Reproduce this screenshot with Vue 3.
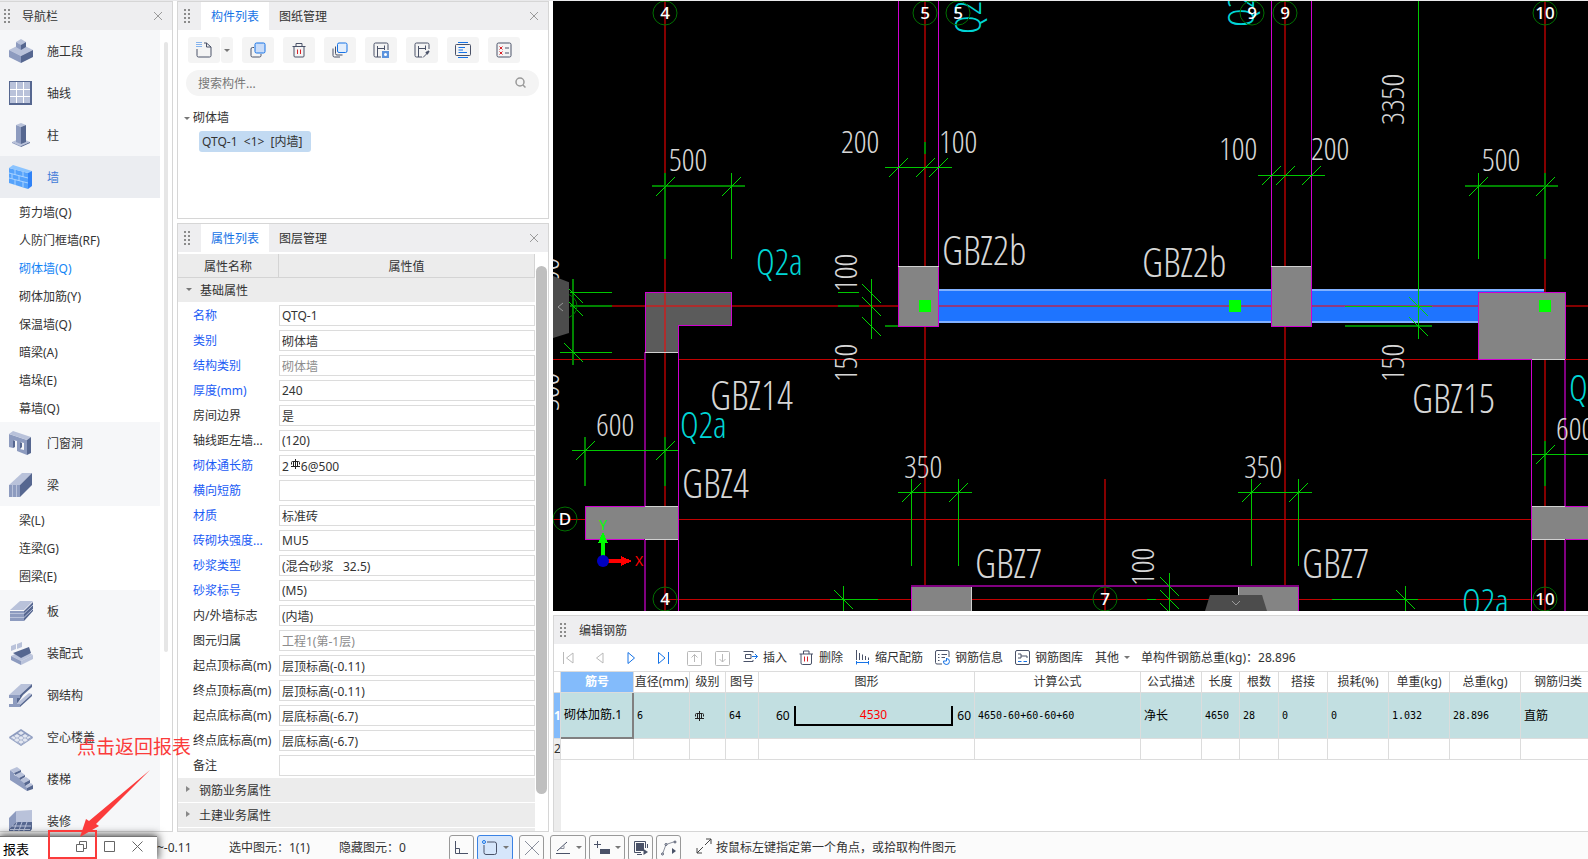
<template>
  <div class="app">
    <main class="workspace">
      <nav class="panel nav">
        <header class="panel-head">
          <span class="grip"></span>
          <h2 class="nav-title">导航栏</h2>
          <button class="close" aria-label="关闭"><svg width="10" height="10"><path d="M1 1L9 9M9 1L1 9" /></svg></button>
        </header>
        <div class="nav-body">
          <template v-for="group in navGroups" :key="group.name">
            <button class="nav-item" :class="{ active: group.name === activeGroup }" @click="activeGroup = group.name">
              <svg width="24" height="24" viewBox="0 0 24 24">
                <path v-for="(p, i) in group.icon" :key="i" :d="p[1]" :fill="p[2] ? 'none' : p[0]" :stroke="p[2] ? p[0] : 'none'" :stroke-width="p[2]" />
              </svg>
              <span>{{ group.name }}</span>
            </button>
            <button v-for="item in group.items" :key="item" class="nav-sub" :class="{ active: item === activeItem }" @click="activeItem = item">{{ item }}</button>
          </template>
          <span class="nav-thumb"></span>
        </div>
      </nav>

      <div class="middle">
        <section class="panel components">
          <header class="panel-head">
            <span class="grip"></span>
            <button class="tab on">构件列表</button>
            <button class="tab">图纸管理</button>
            <button class="close" aria-label="关闭"><svg width="10" height="10"><path d="M1 1L9 9M9 1L1 9" /></svg></button>
          </header>
          <div class="tools">
            <div class="split">
              <button class="tool" aria-label="新建">
                <svg width="16" height="16" class="ic"><path d="M1 7V13.500Q1 15 2.500 15H13.500Q15 15 15 13.500V5L10.500 1H8M10.500 1V5H15" /><path class="b dots" d="M.5 .5H5.500M.5 2.500H5.500M.5 4.500H5.500" /></svg>
              </button>
              <button class="tool narrow" aria-label="更多"><i class="caret"></i></button>
            </div>
            <button class="tool" aria-label="复制">
              <svg width="16" height="16" class="ic"><path d="M4 5.500H2.500Q1 5.500 1 7V13.500Q1 15 2.500 15H9.500Q11 15 11 13.500V12" /><rect class="b" x="5" y="1" width="10" height="10" rx="1.500" fill="#c9dcf8" /></svg>
            </button>
            <button class="tool" aria-label="删除">
              <svg width="16" height="16" class="ic"><path d="M1.500 4.500H14.500M5 4V1.500H11V4M3 4.500V14Q3 15 4 15H12Q13 15 13 14V4.500" /><path class="r" d="M6.500 7.500V12M9.500 7.500V12" /></svg>
            </button>
            <button class="tool" aria-label="层间复制">
              <svg width="16" height="16" class="ic"><path d="M1 6.500V13.500Q1 15 2.500 15H8M3.500 4.500V11.500Q3.500 13 5 13H10.500" /><rect class="b" x="5.500" y="1" width="9.500" height="9.500" rx="1.500" fill="#e3eefc" /></svg>
            </button>
            <button class="tool" aria-label="存档">
              <svg width="16" height="16" class="ic"><path d="M8 15H2.500Q1 15 1 13.500V2.500Q1 1 2.500 1H13.500Q15 1 15 2.500V8M4.500 15V4M11.500 3.500V8M4.500 6.500H11.500" /><rect x="9" y="9" width="7" height="7" fill="#5b93dd" stroke="none" /><circle cx="12.500" cy="12.500" r="1.500" fill="#fff" stroke="none" /></svg>
            </button>
            <button class="tool" aria-label="提取">
              <svg width="16" height="16" class="ic"><path d="M8 15H2.500Q1 15 1 13.500V2.500Q1 1 2.500 1H13.500Q15 1 15 2.500V7M4.500 15V4M11.500 3.500V8M4.500 6.500H11.500M9 15.500L13 11.500" /><path d="M12 10L14 12M13 11L15 9" stroke-width="2" /></svg>
            </button>
            <button class="tool" aria-label="排序">
              <svg width="16" height="16" class="ic"><rect x=".5" y="2.500" width="15" height="11" rx="1" /><path class="b" d="M3 .5H13M3 15.500H13M3.500 5.500H10M3.500 8H8M3.500 10.500H12" /></svg>
            </button>
            <button class="tool" aria-label="检查">
              <svg width="16" height="16" class="ic"><rect x="1" y="1" width="14" height="14" rx="1.500" /><path d="M9 6H13M9 11H13" /><path class="r" d="M3.500 4.500L6.500 7.500M6.500 4.500L3.500 7.500M3.500 9.500L6.500 12.500M6.500 9.500L3.500 12.500" /></svg>
            </button>
          </div>
          <div class="search">
            <input v-model="keyword" aria-label="搜索构件" placeholder="搜索构件..." />
            <svg width="12" height="12"><circle cx="5" cy="5" r="4" /><path d="M8 8L10.500 10.500" /></svg>
          </div>
          <div class="tree">
            <div class="tree-root"><i class="caret"></i>砌体墙</div>
            <button class="tree-leaf">QTQ-1&nbsp; &lt;1&gt;&nbsp; [内墙]</button>
          </div>
        </section>

        <section class="panel props">
          <header class="panel-head">
            <span class="grip"></span>
            <button class="tab on">属性列表</button>
            <button class="tab">图层管理</button>
            <button class="close" aria-label="关闭"><svg width="10" height="10"><path d="M1 1L9 9M9 1L1 9" /></svg></button>
          </header>
          <div class="props-body">
            <div class="props-list">
              <div class="props-head"><span>属性名称</span><span>属性值</span></div>
              <button class="props-group"><i class="caret"></i>基础属性</button>
              <div v-for="(p, i) in props" :key="p.name" class="prop">
                <label :for="'prop' + i" :class="{ blue: p.blue }">{{ p.name }}</label>
                <span class="field">
                  <input :id="'prop' + i" v-model="p.value" :disabled="p.off" />
                  <svg v-if="p.rebar" class="rebar" width="10" height="10"><path :d="rebarPath" /></svg>
                </span>
              </div>
              <button class="props-group"><i class="caret closed"></i>钢筋业务属性</button>
              <button class="props-group"><i class="caret closed"></i>土建业务属性</button>
              <button class="props-group" aria-label="显示样式"></button>
            </div>
            <span class="props-thumb"></span>
          </div>
        </section>
      </div>

      <div class="right">
        <section class="canvas">
          <svg class="drawing" viewBox="553 1 1035 610" preserveAspectRatio="xMinYMin slice">
            <path class="wall-fill" d="M939 289H1545V292H1478V323H939Z" />
            <path class="wall-edge" d="M939 290H1545M939 322H1478" />
            <path class="col dark" d="M645 293H732V326H678V352H645Z" />
            <path class="col" d="M585 506H678V539H585ZM898 266H939V326H898ZM1271 266H1311V326H1271ZM1478 293H1565V360H1478ZM1532 506H1588V539H1532ZM911 586H972V611H911ZM1238 586H1298V611H1238Z" />
            <path class="axis" d="M665 1V293M665 352V506M665 539V611M925 1V266M925 326V586M1285 1V266M1285 326V586M1545 1V293M1545 360V506M1545 539V611M1105 479V611M612 306H645M732 306H898M1565 306H1588" />
            <path class="axis over" d="M665 293V352M645 306H732M939 306H1271M1311 306H1478" />
            <path class="axis thin" d="M553 359.500H645M678 359.500H1478M1565 359.500H1588M553 519.500H585M678 519.500H1532M665 599.500H911M972 599.500H1238M1298 599.500H1545" />
            <path class="pink" d="M898.500 1V326.500H938.500V1M1271.500 1V326.500H1311.500V1M645.500 352V292.500H731.500V325.500H678.500V611M645 506.500H585.500V539.500H645M1532 359.500H1478.500V292.500H1565.500V359M1531.500 360V611M1565 506.500H1588M1565 539.500H1588M911.500 611V586M1298.500 611V586" />
            <path class="pink wide" d="M645 352V506M645 539V611M1565 360V506M1565 539V611M911 586H1299" />
            <path class="edge" d="M898 266.500H939M1271 266.500H1311M645 352.500H678M645 506.500H678M645 539.500H678M1532 359.500H1565M1532 506.500H1565M1532 539.500H1565M971.500 587V611M1238.500 587V611" />
            <path class="dim wide" d="M652 186H745M665 173V259M925 142V154M1465 186H1558M1545 173V259M573 279V365M570 306H612M838 306H859M885 326H898M585 437V486M665 437V486M1345 326H1432M1545 441V486" />
            <path class="dim" d="M731.500 173V259M885 167.500H952M1258 175.500H1325M1418.500 1V339M1345 306.500H1432M1478.500 173V259M570 292.500H612M560 352.500H612M871.500 279V339M838 292.500H859M572 450.500H678M898 492.500H972M911.500 479V566M958.500 479V566M1238 492.500H1312M1251.500 479V566M1298.500 479V566M1532 454.500H1588M830 599.500H878M843.500 586V611M1169.500 573V611M1147 599.500H1156M1332 599.500H1418M1405.500 586V611" />
            <path class="tick" :d="tickPath" />
            <text v-for="(t, i) in cadTexts" :key="'t' + i" class="cad" :class="t[4]" :transform="`translate(${t[1]} ${t[2]}) rotate(${t[3] || 0})`" dy="-2">{{ t[0] }}</text>
            <g v-for="(b, i) in bubbles" :key="'b' + i">
              <circle class="bubble" :cx="b[0]" :cy="b[1]" r="12" />
              <text class="bubble-text" :x="b[0]" :y="b[1] + 6">{{ b[2] }}</text>
            </g>
            <path class="grips" d="M919 300H931V312H919ZM1229 300H1241V312H1229ZM1539 300H1551V312H1539Z" />
            <g class="ucs">
              <path fill="#0f0" d="M601 557V543H598L603 532L608 543H605V557Z" />
              <path fill="#f00" d="M607 559H621V556L632 561L621 566V563H607Z" />
              <circle cx="603" cy="561" r="6" fill="#0000c0" />
              <text x="603" y="530" fill="#0f0">Y</text>
              <text x="639" y="566" fill="#f00">X</text>
            </g>
          </svg>
          <button class="fold fold-left" aria-label="收起左侧"><svg width="8" height="10"><path d="M6 1L1 5L6 9" /></svg></button>
          <button class="fold fold-bottom" aria-label="收起下方"><svg width="10" height="6"><path d="M1 1L5 5L9 1" /></svg></button>
        </section>

        <section class="rebar-panel">
          <header class="panel-head">
            <span class="grip"></span>
            <h2 class="nav-title">编辑钢筋</h2>
          </header>
          <div class="rebar-tools">
            <button class="step" aria-label="首行"><svg width="12" height="14" class="mute"><path d="M1.500 1V13M11 2V12L4.500 7Z" /></svg></button>
            <button class="step" aria-label="上一行"><svg width="12" height="14" class="mute"><path d="M9 2V12L2.500 7Z" /></svg></button>
            <button class="step" aria-label="下一行"><svg width="12" height="14" class="go"><path d="M2 1.500V12.500L8.500 7Z" /></svg></button>
            <button class="step" aria-label="末行"><svg width="12" height="14" class="go"><path d="M.5 1.500V12.500L7 7ZM10.500 1V13" /></svg></button>
            <button class="move" aria-label="上移"><svg width="16" height="16" class="mute"><rect x=".5" y="1.500" width="14" height="14" rx="1" /><path d="M7.500 12V4.500M4.500 7.500L7.500 4.500L10.500 7.500" /></svg></button>
            <button class="move" aria-label="下移"><svg width="16" height="16" class="mute"><rect x=".5" y="1.500" width="14" height="14" rx="1" /><path d="M7.500 4V12M4.500 9L7.500 12L10.500 9" /></svg></button>
            <button class="act"><svg width="15" height="15" class="ic"><path d="M10 1.500H.5M.5 11.500H10M8 4.500H2.500V8.500H8ZM10 1.500V3M10 10V11.500" /><path class="b" d="M9 6.500H14.500M12 4L14.500 6.500L12 9" /></svg>插入</button>
            <button class="act"><svg width="15" height="15" class="ic"><path d="M.5 4H14M4.500 4V1H10V4M2 4V13Q2 14.500 3.500 14.500H11Q12.500 14.500 12.500 13V4" /><path class="r" d="M5.500 6.500V11.500M8.500 6.500V11.500" /></svg>删除</button>
            <button class="act"><svg width="15" height="15" class="ic"><path d="M1.500 0V10M4.500 3V10M7.500 4.500V10M10.500 6V10M13.500 7.500V10" /><path class="b" d="M1 12.500H14M1.500 11V14.500M13.500 11V14.500" /></svg>缩尺配筋</button>
            <button class="act"><svg width="15" height="15" class="ic"><path d="M7 14H2Q.5 14 .5 12.500V2Q.5 .5 2 .5H12.500Q14 .5 14 2V7M3 4.500H4.500M6.500 4.500H12M3 7.500H4.500M6.500 7.500H10M3 10.500H4.500" /><path class="b" d="M8.500 11A3 3 0 1 0 11.500 8.500M8.500 11H11.500V8" /></svg>钢筋信息</button>
            <button class="act"><svg width="15" height="15" class="ic"><rect x=".5" y=".5" width="14" height="14" rx="1.500" /><path d="M3 4H6V8H3M6 6H12V8" /><path class="b" d="M3 11.500H6.500M8.500 11.500H12" /></svg>钢筋图库</button>
            <button class="act other">其他<i class="caret"></i></button>
            <span class="total">单构件钢筋总重(kg)：28.896</span>
          </div>
          <div class="grid-wrap">
            <table class="grid">
              <colgroup><col v-for="(w, i) in colWidths" :key="i" :style="{ width: w + 'px' }" /></colgroup>
              <thead>
                <tr><th></th><th v-for="(h, i) in heads" :key="h" :class="{ sel: i === 0 }">{{ h }}</th></tr>
              </thead>
              <tbody>
                <tr class="current">
                  <th>1</th>
                  <td class="focus">砌体加筋.1</td>
                  <td class="mono">6</td>
                  <td><svg class="rebar" width="10" height="10"><path :d="rebarPath" /></svg></td>
                  <td class="mono">64</td>
                  <td>
                    <div class="shape"><span>60</span><span class="bar">4530</span><span>60</span></div>
                  </td>
                  <td class="mono">4650-60+60-60+60</td>
                  <td>净长</td>
                  <td class="mono">4650</td>
                  <td class="mono">28</td>
                  <td class="mono">0</td>
                  <td class="mono">0</td>
                  <td class="mono">1.032</td>
                  <td class="mono">28.896</td>
                  <td>直筋</td>
                </tr>
                <tr class="blank"><th>2</th><td v-for="h in heads" :key="h"></td></tr>
              </tbody>
            </table>
            <div class="gutter"></div>
          </div>
        </section>
      </div>
    </main>

    <footer class="status">
      <span class="level">~-0.11</span>
      <span class="count">选中图元：1(1)</span>
      <span class="count">隐藏图元：0</span>
      <div class="snaps">
        <button aria-label="正交"><svg width="15" height="15" class="ic"><path d="M1.500 1V13.500H14M1.500 8.500H5.500V13" /></svg></button>
        <button class="wide on" aria-label="捕捉"><svg width="16" height="16" class="ic"><path d="M5 2H12.500Q14.500 2 14.500 4V12.500Q14.500 14.500 12.500 14.500H4Q2 14.500 2 12.500V5" /><circle class="b" cx="2" cy="2" r="1.500" /></svg><i class="caret"></i></button>
        <button aria-label="交点"><svg width="16" height="16" class="ic soft"><path d="M1 1L15 15M15 1L1 15" /></svg></button>
        <button class="wide" aria-label="角度"><svg width="16" height="16" class="ic"><path d="M1 13.500H15M2 11L12 2" /><path class="thin" d="M5 8.500H9V5.500" /></svg><i class="caret"></i></button>
        <button class="wide" aria-label="偏移"><svg width="16" height="16" class="ic"><path d="M0 4.500H7M3.500 1V8" /><rect x="6.500" y="9.500" width="9" height="4" fill="#4a5268" /></svg><i class="caret"></i></button>
        <button aria-label="选择"><svg width="16" height="16" class="ic"><rect x="3.500" y="3.500" width="7" height="7" fill="#4a5268" /><path d="M4 14.500H9M1.500 1.500H12.500V8M1.500 1.500V12.500H8M14.500 4V8" /><path d="M10.500 9V15L15 12Z" fill="#4a5268" stroke="none" /></svg></button>
        <button aria-label="曲线"><svg width="16" height="16" class="ic"><path class="thin" d="M1.500 14L5 4.500L14 1.500" /><circle cx="5" cy="4.500" r="1" fill="#fff" /><circle cx="14" cy="2" r="1" fill="#fff" /><circle cx="1.500" cy="14" r="1" fill="#fff" /><path d="M11 8V14L15 11Z" fill="#4a5268" stroke="none" /></svg></button>
      </div>
      <svg width="16" height="16" class="hint-icon"><path d="M9 7L15 1M10 1H15V6M7 9L1 15M1 10V15H6" /></svg>
      <span>按鼠标左键指定第一个角点，或拾取构件图元</span>
    </footer>

    <aside class="report">
      <span>报表</span>
      <button aria-label="还原"><svg width="11" height="11"><path d="M3.500 3.500V.5H10.500V7.500H7.500M.5 3.500H7.500V10.500H.5Z" /></svg></button>
      <button aria-label="最大化"><svg width="11" height="11"><path d="M.5 .5H10.500V10.500H.5Z" /></svg></button>
      <button aria-label="关闭"><svg width="11" height="11"><path d="M.5 .5L10.500 10.500M10.500 .5L.5 10.500" /></svg></button>
    </aside>
    <div class="note">
      <p>点击返回报表</p>
      <svg width="110" height="72"><path d="M73 1L12 52L9 50L3 68L22 57L19 55Z" /></svg>
      <span class="note-box"></span>
    </div>
  </div>
</template>

<script setup>
import { ref, reactive } from 'vue'

const L = '#b9c2da'
const M = '#8d9bbf'
const D = '#566790'

const activeGroup = ref('墙')
const activeItem = ref('砌体墙(Q)')
const keyword = ref('')

// icon parts: [colour, path, stroke width when the part is a line]
const navGroups = [
  {
    name: '施工段',
    icon: [[L, 'M0 11L12 5L24 11L12 17Z'], [M, 'M0 11L12 17V24L0 18Z'], [D, 'M24 11L12 17V24L24 18Z'], [L, 'M7 3L12 0L17 3L12 6Z'], [M, 'M7 3L12 6V11L7 8Z'], [D, 'M17 3L12 6V11L17 8Z']]
  },
  {
    name: '轴线',
    icon: [[D, 'M0 0H23V24H0Z'], [L, 'M1 1H21V22H1Z'], ['#fff', 'M7.500 1V22M14.500 1V22M1 8.500H21M1 15.500H21', 1]]
  },
  {
    name: '柱',
    icon: [[L, 'M3 19L12 15L21 19L12 23Z'], [M, 'M3 19L12 23V24L3 20Z'], [D, 'M21 19L12 23V24L21 20Z'], [L, 'M7 2L12 0L17 2L12 4Z'], [M, 'M7 2L12 4V21L7 19Z'], [D, 'M17 2L12 4V21L17 19Z']]
  },
  {
    name: '墙',
    icon: [['#55a2fb', 'M0 3L19 8V24L0 18Z'], ['#8bc4ff', 'M0 3L4 0L23 6L19 8Z'], ['#2f82f7', 'M19 8L23 6V21L19 24Z'], ['#a9d2ff', 'M0 8L19 13M0 13L19 18M6 5V10M14 7V12M3 9V14M10 11V16M6 15V20M14 17V22', 1]],
    items: ['剪力墙(Q)', '人防门框墙(RF)', '砌体墙(Q)', '砌体加筋(Y)', '保温墙(Q)', '暗梁(A)', '墙垛(E)', '幕墙(Q)']
  },
  {
    name: '门窗洞',
    icon: [[M, 'M0 3L18 9V24L8 20V10L4 9V17L0 16ZM11 11V18L15 19V12Z'], [L, 'M0 3L4 0L22 6L18 9Z'], [D, 'M18 9L22 6V22L18 24ZM4 9L6 10V16L4 17ZM11 18L13 16V12L11 11Z']]
  },
  {
    name: '梁',
    icon: [[L, 'M0 12L13 0H23L11 12Z'], [D, 'M11 12L23 0V12L11 24Z'], [M, 'M0 12H11V24H0Z'], [L, 'M3.500 12V24M7.500 12V24', 1]],
    items: ['梁(L)', '连梁(G)', '圈梁(E)']
  },
  {
    name: '板',
    icon: [[D, 'M15 12L24 3V12L15 22Z'], [M, 'M1 12H15V22H1Z'], [L, 'M1 11L11 2H24L15 11Z'], [L, 'M1 14.500H15L24 6M1 18.500H15L24 10', 1]]
  },
  {
    name: '装配式',
    icon: [[L, 'M2 15L12 20L24 14L14 9Z'], [D, 'M4 12L12 17L22 12L20 6L12 9Z'], [M, 'M2 15L12 20V24L2 19Z'], [L, 'M24 14L12 20V24L24 18ZM2 5L7 3V8L2 10ZM8 3L13 1V6L8 8Z']]
  },
  {
    name: '钢结构',
    icon: [[L, 'M0 12L12 1H23L11 12Z'], [D, 'M11 12L23 1V4L14 12L8 21V15Z'], [L, 'M7 21L20 10L23 11L11 22Z'], [D, 'M11 22L23 11V13L11 24Z'], [M, 'M0 12H11V15H8V21H11V24H0V21H4V15H0Z']]
  },
  {
    name: '空心楼盖',
    icon: [[M, 'M0 12L12 4L24 12L12 20Z'], ['#e3e7f1', 'M9 8l3-2 3 2-3 2ZM5 11l3-2 3 2-3 2ZM13 11l3-2 3 2-3 2ZM2 12.500l2-1.500 3 2-2 1.500ZM9 13l3-2 3 2-3 2ZM17 13l3-2 2 1-3 2ZM5 15l3-2 3 2-3 2ZM13 15l3-2 3 2-3 2ZM9 17l3-2 3 2-3 2Z'], [M, 'M0 12L12 20L24 12V13L12 21L0 13Z']]
  },
  {
    name: '楼梯',
    icon: [[M, 'M1 3L5 6V8L10 10V12L15 14V17L18 20V24L1 13Z'], [L, 'M1 3L8 0L12 3L5 6ZM6 8L12 5L16 8L10 11ZM11 13L17 10L21 13L15 16ZM16 19L22 16L24 18L18 21Z'], [D, 'M5 6L12 3V5L6 8ZM10 11L16 8V10L11 13ZM15 16L21 13V16L16 19ZM18 21L24 18V22L18 24Z']]
  },
  {
    name: '装修',
    icon: [[L, 'M7 2L23 1V13H7Z'], [M, 'M0 9L7 2V13L0 20Z'], [D, 'M0 20L7 13H23V20L20 24H0Z'], [L, 'M3 17H22M1 20.500H21M8 13L4 24M13 13L9 24M18 13L14 24', 1]]
  }
]

const props = reactive([
  { name: '名称', value: 'QTQ-1', blue: true },
  { name: '类别', value: '砌体墙', blue: true },
  { name: '结构类别', value: '砌体墙', blue: true, off: true },
  { name: '厚度(mm)', value: '240', blue: true },
  { name: '房间边界', value: '是' },
  { name: '轴线距左墙...', value: '(120)' },
  { name: '砌体通长筋', value: '2\u30006@500', blue: true, rebar: true },
  { name: '横向短筋', value: '', blue: true },
  { name: '材质', value: '标准砖', blue: true },
  { name: '砖砌块强度...', value: 'MU5', blue: true },
  { name: '砂浆类型', value: '(混合砂浆   32.5)', blue: true },
  { name: '砂浆标号', value: '(M5)', blue: true },
  { name: '内/外墙标志', value: '(内墙)' },
  { name: '图元归属', value: '工程1(第-1层)', off: true },
  { name: '起点顶标高(m)', value: '层顶标高(-0.11)' },
  { name: '终点顶标高(m)', value: '层顶标高(-0.11)' },
  { name: '起点底标高(m)', value: '层底标高(-6.7)' },
  { name: '终点底标高(m)', value: '层底标高(-6.7)' },
  { name: '备注', value: '' }
])

const rebarPath = 'M4.500 0V10M0 7.500H9M2.500 2.500V7.500M6.500 2.500V7.500M.5 5.500V3.500Q.5 2.500 1.500 2.500H7.500Q8.500 2.500 8.500 3.500V5.500'

const heads = ['筋号', '直径(mm)', '级别', '图号', '图形', '计算公式', '公式描述', '长度', '根数', '搭接', '损耗(%)', '单重(kg)', '总重(kg)', '钢筋归类']
const colWidths = [7, 73, 56, 36, 33, 216, 166, 61, 38, 39, 49, 61, 61, 71, 75]

// grid bubbles: x, y, number
const bubbles = [
  [665, 13, '4'], [925, 13, '5'], [958, 13, '5'], [1252, 13, '9'], [1285, 13, '9'], [1545, 13, '10'],
  [565, 306, ''], [565, 519, 'D'], [665, 599, '4'], [1105, 599, '7'], [1545, 599, '10']
]

// drawing labels: text, x, baseline, rotation, class
const cadTexts = [
  ['500', 669, 173], ['200', 841, 155], ['100', 939, 155], ['100', 1219, 162], ['200', 1311, 162], ['500', 1482, 173],
  ['3350', 1406, 125, -90], ['100', 859, 292, -90], ['150', 859, 382, -90], ['150', 1406, 382, -90], ['100', 1156, 586, -90],
  ['600', 596, 438], ['350', 904, 480], ['350', 1244, 480], ['600', 1556, 442],
  ['300', 561, 296, -90], ['300', 561, 411, -90],
  ['GBZ2b', 942, 267, 0, 'big'], ['GBZ2b', 1142, 279, 0, 'big'], ['GBZ14', 710, 412, 0, 'big'], ['GBZ15', 1412, 415, 0, 'big'],
  ['GBZ4', 682, 500, 0, 'big'], ['GBZ7', 975, 580, 0, 'big'], ['GBZ7', 1302, 580, 0, 'big'],
  ['Q2a', 756, 277, 0, 'cyan'], ['Q2a', 680, 440, 0, 'cyan'], ['Q2a', 1569, 403, 0, 'cyan'], ['Q2a', 1462, 617, 0, 'cyan'],
  ['Q2a', 983, 34, -90, 'cyan'], ['Q2a', 1256, 27, -90, 'cyan']
]

const slashes = [[665, 186], [731, 186], [898, 167], [925, 167], [938, 167], [1271, 175], [1285, 175], [1311, 175], [1478, 186], [1545, 186], [585, 450], [665, 450], [911, 492], [958, 492], [1251, 492], [1298, 492], [1545, 454]]
const backslashes = [[1418, 306], [1418, 326], [573, 293], [573, 306], [573, 352], [871, 293], [871, 306], [871, 326], [843, 599], [1169, 586], [1169, 599], [1169, 612], [1405, 599]]
const tickPath = [
  ...slashes.map(([x, y]) => `M${x - 9} ${y + 10}L${x + 10} ${y - 9}`),
  ...backslashes.map(([x, y]) => `M${x - 9} ${y - 9}L${x + 10} ${y + 10}`)
].join('')
</script>

<style>
body {
  margin: 0;
  background: #fff;
}
</style>

<style scoped>
.app {
  position: relative;
  display: flex;
  flex-direction: column;
  height: 100vh;
  overflow: hidden;
  box-sizing: border-box;
  border-top: 1px solid #e9e9eb;
  font: 12px/18px "Noto Sans", "Noto Sans CJK SC", sans-serif;
  color: #333;
}

button,
input {
  margin: 0;
  padding: 0;
  border: 0;
  background: none;
  font: inherit;
  color: inherit;
}

svg {
  display: block;
  flex: none;
}

.workspace {
  flex: 1;
  min-height: 0;
  display: flex;
  gap: 4px;
}

.panel {
  box-sizing: border-box;
  border: 1px solid #d6d6d6;
  overflow: hidden;
}

.panel-head {
  display: flex;
  align-items: stretch;
  flex: none;
  height: 28px;
  background: #eeeef0;
}

.grip {
  flex: none;
  align-self: center;
  width: 6px;
  height: 14px;
  margin: 0 11px 0 6px;
  background: repeating-linear-gradient(#8b8b8b 0 2px, transparent 2px 4px);
  -webkit-mask: linear-gradient(90deg, #000 2px, transparent 2px 4px, #000 4px);
  mask: linear-gradient(90deg, #000 2px, transparent 2px 4px, #000 4px);
}

.close {
  margin-left: auto;
  margin-right: 9px;
  display: flex;
  align-items: center;
}

.close svg {
  fill: none;
  stroke: #9a9a9a;
}

.nav-title {
  margin: 0;
  padding-top: 2px;
  align-self: center;
  font-size: 12px;
  font-weight: 400;
}

.caret {
  width: 0;
  height: 0;
  border: 3px solid transparent;
  border-top-color: #777;
  border-bottom: 0;
}

.caret.closed {
  border: 3px solid transparent;
  border-left: 4px solid #888;
  border-right: 0;
}

/* navigation */
.nav {
  flex: none;
  display: flex;
  flex-direction: column;
  width: 173px;
  border-left: 0;
}

.nav .grip {
  margin: 0 12px 0 4px;
}

.nav-body {
  position: relative;
  flex: 1;
  min-height: 0;
  overflow: hidden;
}

.nav-item,
.nav-sub {
  display: flex;
  align-items: center;
  width: 160px;
}

.nav-item {
  height: 42px;
  padding-left: 9px;
  gap: 14px;
  background: #f6f7f9;
}

.nav-item span {
  padding-top: 2px;
}

.nav-item.active {
  background: #ebedf1;
  color: #3f7ad8;
}

.nav-sub {
  height: 28px;
  padding: 2px 0 0 19px;
}

.nav-sub.active {
  color: #1484f5;
}

.nav-thumb {
  position: absolute;
  top: 12px;
  left: 164px;
  width: 4px;
  height: 610px;
  border-radius: 2px;
  background: #e6e6e6;
}

/* component list */
.middle {
  flex: none;
  display: flex;
  flex-direction: column;
  gap: 4px;
  width: 372px;
}

.components {
  flex: none;
  height: 218px;
}

.tab {
  padding: 2px 10px 0;
}

.tab.on {
  background: #fff;
  color: #1673e6;
}

.tools {
  display: flex;
  gap: 9px;
  padding: 7px 10px;
}

.split {
  display: flex;
  gap: 1px;
}

.tool {
  display: flex;
  align-items: center;
  justify-content: center;
  width: 32px;
  height: 26px;
  border-radius: 3px;
  background: #f4f4f4;
}

.tool.narrow {
  width: 12px;
}

.ic {
  fill: none;
  stroke: #4a5268;
}

.ic .b {
  stroke: #1673e6;
}

.ic .r {
  stroke: #d8232a;
}

.ic .dots {
  stroke-dasharray: 1 1;
}

.ic.soft,
.ic .thin {
  stroke: #8a8f9c;
}

.search {
  display: flex;
  align-items: center;
  height: 26px;
  margin: 0 9px 0 8px;
  padding: 0 12px 0 12px;
  border-radius: 13px;
  background: #f4f4f4;
}

.search input {
  flex: 1;
  min-width: 0;
  padding-top: 2px;
  outline: 0;
}

.search input::placeholder {
  color: #777;
  opacity: 1;
}

.search svg {
  fill: none;
  stroke: #999;
  stroke-width: 1.5;
}

.tree {
  padding: 13px 6px;
}

.tree-root {
  display: flex;
  align-items: center;
  gap: 3px;
}

.tree-leaf {
  height: 21px;
  margin: 4px 0 0 15px;
  padding: 0 8px 0 3px;
  border-radius: 3px;
  background: #c2daf2;
  white-space: nowrap;
}

/* properties */
.props {
  flex: 1;
  min-height: 0;
  display: flex;
  flex-direction: column;
}

.props-body {
  flex: 1;
  min-height: 0;
  display: flex;
  overflow: hidden;
  padding-top: 2px;
}

.props-list {
  flex: 1;
  display: flex;
  flex-direction: column;
}

.props-head {
  flex: none;
  display: flex;
  height: 24px;
  line-height: 25px;
  background: #ececec;
  border-bottom: 1px solid #d4d4d4;
  box-sizing: border-box;
  text-align: center;
}

.props-head span:first-child {
  width: 101px;
  box-sizing: border-box;
  border-right: 1px solid #d4d4d4;
}

.props-head span:last-child {
  flex: 1;
  border-right: 1px solid #d4d4d4;
}

.props-group {
  flex: none;
  display: flex;
  align-items: center;
  gap: 8px;
  height: 24px;
  margin-bottom: 1px;
  padding: 1px 0 0 8px;
  background: #ececec;
}

.props-group .caret {
  margin-bottom: 3px;
}

.props-group .caret.closed {
  margin-right: 1px;
}

.prop {
  flex: none;
  display: flex;
  align-items: center;
  height: 25px;
}

.prop label {
  width: 86px;
  padding-left: 15px;
  white-space: nowrap;
}

.prop label.blue {
  color: #1c5cf5;
}

.field {
  position: relative;
  flex: 1;
  display: flex;
}

.field input {
  flex: 1;
  min-width: 0;
  height: 21px;
  padding: 0 2px;
  box-sizing: border-box;
  border: 1px solid #dcdcdc;
  background: #fff;
}

.field input:disabled {
  color: #8c8c8c;
}

.rebar {
  fill: none;
  stroke: #222;
}

.field .rebar {
  position: absolute;
  left: 12px;
  top: 4px;
}

.props-thumb {
  width: 11px;
  height: 528px;
  margin: 12px 1px 0;
  border-radius: 6px;
  background: #bfbfbf;
}

/* drawing area */
.right {
  flex: 1;
  min-width: 0;
  display: flex;
  flex-direction: column;
  gap: 4px;
}

.canvas {
  position: relative;
  flex: 1;
  min-height: 0;
  background: #000;
  overflow: hidden;
}

.drawing {
  width: 100%;
  height: 100%;
  fill: none;
}

.drawing path {
  shape-rendering: crispEdges;
}

.drawing .wall-fill {
  fill: #1e74ff;
}

.drawing .wall-edge {
  stroke: #82b1ff;
  stroke-width: 2;
}

.drawing .col {
  fill: #848484;
}

.drawing .col.dark {
  fill: #5b5b5b;
}

.drawing .axis {
  stroke: #850000;
  stroke-width: 2;
}

.drawing .axis.over {
  stroke: #ff0000;
  stroke-opacity: .5;
}

.drawing .axis.thin {
  stroke: #c00000;
  stroke-width: 1;
}

.drawing .pink {
  stroke: #d000d0;
}

.drawing .pink.wide {
  stroke: #800080;
  stroke-width: 2;
}

.drawing .edge {
  stroke: #d0d0d0;
}

.drawing .dim {
  stroke: #00c800;
}

.drawing .dim.wide {
  stroke: #008400;
  stroke-width: 2;
}

.drawing .tick {
  stroke: #00d800;
}

.drawing .grips {
  fill: #0f0;
}

.bubble {
  stroke: #007000;
}

.bubble-text {
  fill: #fff;
  font-size: 17px;
  font-weight: 500;
  text-anchor: middle;
}

.cad {
  fill: #d6d6d6;
  font-family: "Open Sans Condensed Light", "Roboto Condensed Light", "Roboto Condensed", "Open Sans Condensed", "Liberation Sans Narrow", sans-serif;
  font-weight: 300;
  font-size: 32px;
}

.cad.big {
  font-size: 40px;
}

.cad.cyan {
  fill: #00d5d5;
  font-size: 36px;
}

.ucs text {
  font-size: 14px;
  text-anchor: middle;
}

.fold {
  position: absolute;
  display: flex;
  align-items: center;
  justify-content: center;
  background: #4c4c4c;
}

.fold svg {
  fill: none;
  stroke: #9a9a9a;
}

.fold-left {
  left: 0;
  top: 275px;
  width: 16px;
  height: 62px;
  clip-path: polygon(0 0, 100% 10%, 100% 92%, 0 100%);
}

.fold-bottom {
  left: 652px;
  bottom: 0;
  width: 62px;
  height: 16px;
  clip-path: polygon(8% 0, 92% 0, 100% 100%, 0 100%);
}

/* rebar table */
.rebar-panel {
  flex: none;
  display: flex;
  flex-direction: column;
  height: 217px;
  box-sizing: border-box;
  border: 1px solid #d6d6d6;
  border-right: 0;
}

.rebar-panel .grip {
  margin-right: 13px;
}

.rebar-tools {
  flex: none;
  display: flex;
  align-items: center;
  height: 27px;
  padding-left: 8px;
  white-space: nowrap;
}

.rebar-tools svg {
  fill: none;
}

.mute {
  stroke: #b9b9b9;
}

.go {
  stroke: #1673e6;
}

.step {
  width: 32px;
}

.move {
  width: 28px;
}

.step + .move {
  margin-left: -3px;
}

.act {
  display: flex;
  align-items: center;
  gap: 5px;
  margin-right: 12px;
}

.act.other {
  margin-right: 11px;
}

.grid-wrap {
  flex: 1;
  min-height: 0;
  display: flex;
  flex-direction: column;
  overflow: hidden;
}

.grid {
  flex: none;
  width: 1042px;
  table-layout: fixed;
  border-collapse: separate;
  border-spacing: 0;
  border-top: 1px solid #dcdcdc;
}

.grid th,
.grid td {
  padding: 0;
  box-sizing: border-box;
  border-right: 1px solid #dcdcdc;
  border-bottom: 1px solid #dcdcdc;
  font-weight: 400;
  white-space: nowrap;
}

.grid td {
  padding-left: 3px;
}

.grid thead th {
  height: 21px;
}

.grid thead th.sel {
  background: #83bbfb;
  color: #fff;
  font-weight: 700;
}

.grid tbody th {
  overflow: hidden;
  background: #eee;
}

.grid .current {
  height: 46px;
  background: #c2dfe1;
  color: #000;
}

.grid .current th {
  background: #83bbfb;
  color: #fff;
  font-weight: 700;
}

.grid .blank {
  height: 21px;
}

.grid td.focus {
  border-right: 2px solid #808080;
  border-bottom: 2px solid #808080;
}

.grid td.mono {
  font-family: "DejaVu Sans Mono", monospace;
  font-size: 10px;
}

.grid .rebar {
  margin-left: 2px;
}

.shape {
  display: flex;
  align-items: center;
  gap: 4px;
  padding: 0 3px 0 14px;
}

.shape .bar {
  flex: 1;
  box-sizing: border-box;
  height: 20px;
  line-height: 18px;
  border: 2px solid #000;
  border-top: 0;
  color: #f00;
  text-align: center;
}

.gutter {
  flex: 1;
  width: 7px;
  background: #ececec;
}

/* status bar */
.status {
  flex: none;
  display: flex;
  align-items: center;
  height: 27px;
  padding-left: 157px;
  background: #fbfbfb;
  white-space: nowrap;
}

.status > span {
  padding-top: 5px;
}

.level {
  width: 72px;
}

.count {
  width: 110px;
}

.snaps {
  display: flex;
  gap: 3px;
  height: 25px;
  margin-top: 3px;
}

.snaps button {
  display: flex;
  align-items: center;
  justify-content: center;
  gap: 5px;
  width: 25px;
  height: 26px;
  box-sizing: border-box;
  border: 1px solid #999;
  border-radius: 3px;
}

.snaps .wide {
  width: 36px;
}

.snaps .on {
  border-color: #3a82e4;
  background: #d6e6fb;
}

.snaps button:nth-child(3) {
  margin: 0 3px;
}

.hint-icon {
  margin: 0 4px 0 15px;
  fill: none;
  stroke: #444;
}

/* minimised report window with its callout */
.report {
  position: absolute;
  left: 0;
  bottom: 0;
  display: flex;
  align-items: center;
  gap: 17px;
  width: 157px;
  height: 23px;
  padding-left: 3px;
  box-sizing: border-box;
  border-top: 1px solid #777;
  background: #fff;
  box-shadow: 0 0 9px 1px rgba(0, 0, 0, .75);
  color: #000;
  font-size: 13px;
}

.report span {
  margin-right: 30px;
  padding-top: 2px;
}

.report button svg {
  margin-bottom: 4px;
  fill: none;
  stroke: #666;
}

.note {
  position: absolute;
  left: 77px;
  bottom: 0;
  height: 125px;
  color: #fb3b3b;
  pointer-events: none;
}

.note p {
  margin: 0;
  font: 19px/24px "Noto Sans CJK SC", sans-serif;
  white-space: nowrap;
}

.note svg {
  position: absolute;
  top: 35px;
  left: 0;
  fill: #fb3b3b;
}

.note-box {
  position: absolute;
  left: -29px;
  bottom: 0;
  width: 49px;
  height: 29px;
  box-sizing: border-box;
  border: 2px solid #fb3b3b;
}
</style>
